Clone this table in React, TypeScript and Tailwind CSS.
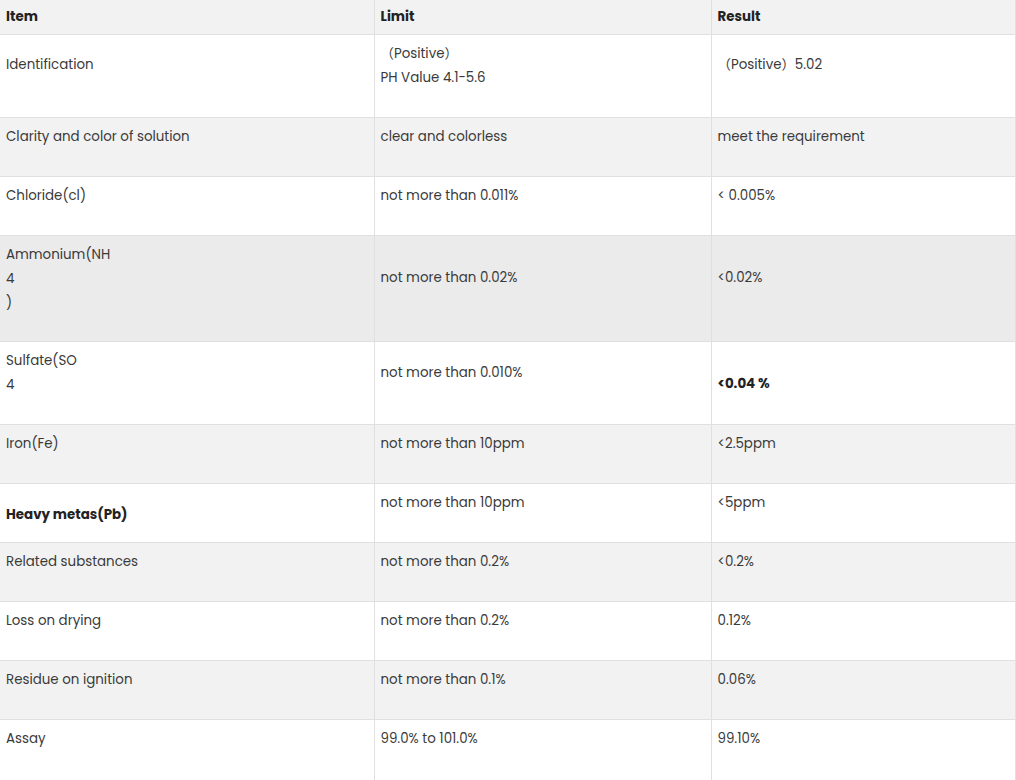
import React from "react";

type Cell = { lines: string[]; pt?: string; bold?: boolean };
type Row = { h: string; bg: string; cells: Cell[] };

const rows: Row[] = [
  {
    h: "h-[83px]",
    bg: "bg-white",
    cells: [
      { lines: ["Identification"], pt: "pt-[18px]" },
      { lines: ["（Positive）", "PH Value 4.1-5.6"] },
      { lines: ["（Positive）5.02"], pt: "pt-[18px]" },
    ],
  },
  {
    h: "h-[59px]",
    bg: "bg-[#f2f2f2]",
    cells: [
      { lines: ["Clarity and color of solution"] },
      { lines: ["clear and colorless"] },
      { lines: ["meet the requirement"] },
    ],
  },
  {
    h: "h-[59px]",
    bg: "bg-white",
    cells: [
      { lines: ["Chloride(cl)"] },
      { lines: ["not more than 0.011%"] },
      { lines: ["< 0.005%"] },
    ],
  },
  {
    h: "h-[106px]",
    bg: "bg-[#ebebeb]",
    cells: [
      { lines: ["Ammonium(NH", "4", ")"] },
      { lines: ["not more than 0.02%"], pt: "pt-[30px]" },
      { lines: ["<0.02%"], pt: "pt-[30px]" },
    ],
  },
  {
    h: "h-[83px]",
    bg: "bg-white",
    cells: [
      { lines: ["Sulfate(SO", "4"] },
      { lines: ["not more than 0.010%"], pt: "pt-[19px]" },
      { lines: ["<0.04 %"], pt: "pt-[30px]", bold: true },
    ],
  },
  {
    h: "h-[59px]",
    bg: "bg-[#f2f2f2]",
    cells: [
      { lines: ["Iron(Fe)"] },
      { lines: ["not more than 10ppm"] },
      { lines: ["<2.5ppm"] },
    ],
  },
  {
    h: "h-[59px]",
    bg: "bg-white",
    cells: [
      { lines: ["Heavy metas(Pb)"], pt: "pt-[19px]", bold: true },
      { lines: ["not more than 10ppm"] },
      { lines: ["<5ppm"] },
    ],
  },
  {
    h: "h-[59px]",
    bg: "bg-[#f2f2f2]",
    cells: [
      { lines: ["Related substances"] },
      { lines: ["not more than 0.2%"] },
      { lines: ["<0.2%"] },
    ],
  },
  {
    h: "h-[59px]",
    bg: "bg-white",
    cells: [
      { lines: ["Loss on drying"] },
      { lines: ["not more than 0.2%"] },
      { lines: ["0.12%"] },
    ],
  },
  {
    h: "h-[59px]",
    bg: "bg-[#f2f2f2]",
    cells: [
      { lines: ["Residue on ignition"] },
      { lines: ["not more than 0.1%"] },
      { lines: ["0.06%"] },
    ],
  },
  {
    h: "h-[70px]",
    bg: "bg-white",
    cells: [
      { lines: ["Assay"] },
      { lines: ["99.0% to 101.0%"] },
      { lines: ["99.10%"] },
    ],
  },
];

export default function App() {
  return (
    <div
      className="w-[1016px] h-[780px] overflow-hidden bg-white text-[13.4px] text-[#3a3a3a]"
      style={{ fontFamily: '"Poppins", "Open Sans", "Noto Sans CJK SC", sans-serif' }}
    >
      <table className="w-full table-fixed border-collapse">
        <colgroup>
          <col className="w-[374px]" />
          <col className="w-[337px]" />
          <col />
        </colgroup>
        <thead>
          <tr className="h-[34px] bg-[#f2f2f2]">
            {["Item", "Limit", "Result"].map((t) => (
              <th
                key={t}
                className="border-r border-b border-[#e0e0e0] px-[6px] pt-[5px] text-left align-top font-bold leading-[24px] text-[#222]"
              >
                {t}
              </th>
            ))}
          </tr>
        </thead>
        <tbody>
          {rows.map((r, i) => (
            <tr key={i} className={`${r.h} ${r.bg}`}>
              {r.cells.map((c, j) => (
                <td
                  key={j}
                  className={`border-r border-b border-[#e0e0e0] px-[6px] align-top leading-[24px] ${c.pt ?? "pt-[7px]"} ${c.bold ? "font-bold text-[#222]" : ""}`}
                >
                  {c.lines.map((l, k) => (
                    <div key={k}>{l}</div>
                  ))}
                </td>
              ))}
            </tr>
          ))}
        </tbody>
      </table>
    </div>
  );
}
